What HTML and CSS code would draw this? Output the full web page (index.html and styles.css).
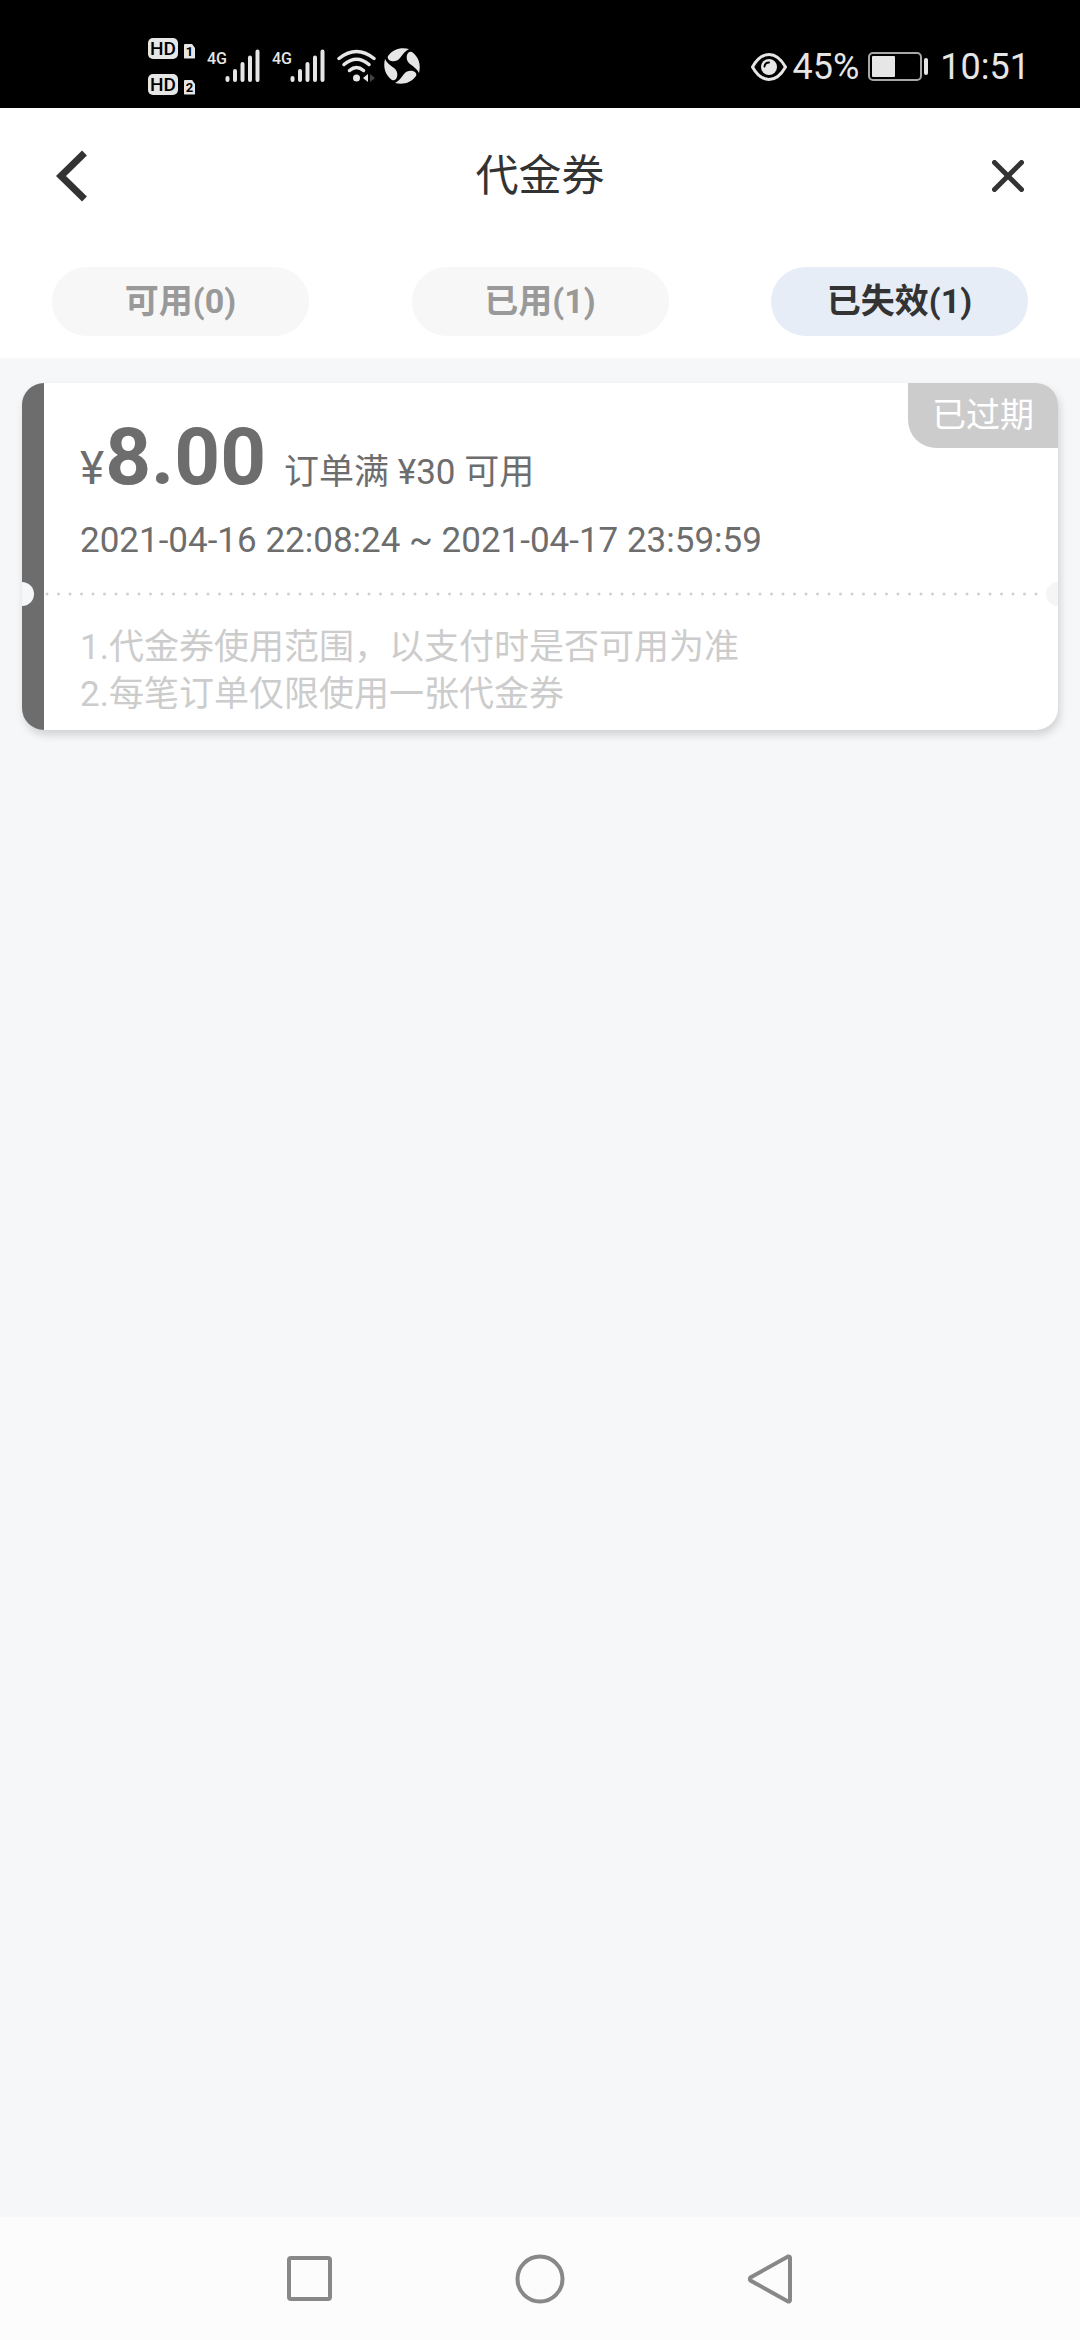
FILE: index.html
```html
<!DOCTYPE html>
<html lang="zh-CN">
<head>
  <meta charset="UTF-8" />
  <meta name="viewport" content="width=device-width, initial-scale=1.0" />
  <title>代金券</title>
  <link rel="stylesheet" href="styles.css">
</head>
<body>
  <div class="status-bar">
    <div class="status-left">
      <div class="hd-list">
        <div class="hd-row"><span class="hd">HD</span><span class="sim">1</span></div>
        <div class="hd-row"><span class="hd">HD</span><span class="sim">2</span></div>
      </div>
      <svg class="signal" width="53" height="34" viewBox="0 0 53 34">
        <text x="0" y="15">4G</text>
        <path d="M20.500 29v2M28 22v9M35.500 15v16M43 8.500v22.500M50.500 2.500v28.500" />
      </svg>
      <svg class="signal" width="53" height="34" viewBox="0 0 53 34">
        <text x="0" y="15">4G</text>
        <path d="M20.500 29v2M28 22v9M35.500 15v16M43 8.500v22.500M50.500 2.500v28.500" />
      </svg>
      <div class="status-icons">
        <svg width="39" height="34" viewBox="0 0 39 34">
          <g fill="none" stroke="#e6e6e6" stroke-width="3.500" stroke-linecap="round">
            <path d="M2 9.500Q19.500-4.500 37 9.500" />
            <path d="M7 15.500Q19.500 5 32 15.500" />
            <path d="M12.500 21.500Q19.500 15.500 26.500 21.500" />
          </g>
          <circle cx="19.500" cy="29" r="3.500" fill="#e6e6e6" />
          <path d="M31 25v8l-5-4z" fill="#e6e6e6" />
          <path d="M33 25l5 4-5 4z" fill="#444" />
        </svg>
        <svg width="36" height="36" viewBox="-18 -18 36 36" fill="#e6e6e6">
          <path d="M-14-10C-9-17-1-19 7-17C3-15 1-12-2-8C-5-4-10-4-13-6Q-15-8-14-10z" />
          <path d="M-14-10C-9-17-1-19 7-17C3-15 1-12-2-8C-5-4-10-4-13-6Q-15-8-14-10z" transform="rotate(90)" />
          <path d="M-14-10C-9-17-1-19 7-17C3-15 1-12-2-8C-5-4-10-4-13-6Q-15-8-14-10z" transform="rotate(180)" />
          <path d="M-14-10C-9-17-1-19 7-17C3-15 1-12-2-8C-5-4-10-4-13-6Q-15-8-14-10z" transform="rotate(270)" />
        </svg>
      </div>
    </div>
    <div class="status-right">
      <svg width="36" height="28" viewBox="0 0 36 28">
        <path d="M1.500 14C6 6 12 1.500 18 1.500S30 6 34.500 14C30 22 24 26.500 18 26.500S6 22 1.500 14z" fill="none" stroke="#e6e6e6" stroke-width="3" />
        <circle cx="18" cy="14" r="8" fill="#e6e6e6" />
        <path d="M13.500 13.500Q14 9.500 18 9.500" fill="none" stroke="#000" stroke-width="2" stroke-linecap="round" />
      </svg>
      <span class="percent">45%</span>
      <svg class="battery" width="60" height="30" viewBox="0 0 60 30">
        <rect x="1" y="1" width="52" height="27" rx="4" fill="none" stroke="#a5a8a5" stroke-width="2" />
        <rect x="4" y="4" width="23" height="21" rx="1" fill="#e6e6e6" />
        <rect x="56" y="6" width="4" height="17" rx="2" fill="#e6e6e6" />
      </svg>
      <span>10:51</span>
    </div>
  </div>

  <header class="header">
    <div class="title-bar">
      <button class="icon-btn" type="button" aria-label="返回">
        <svg width="32" height="52" viewBox="0 0 32 52"><path d="M28.500 3L5 26l23.500 23" stroke-width="7" /></svg>
      </button>
      <h1>代金券</h1>
      <button class="icon-btn" type="button" aria-label="关闭">
        <svg width="32" height="32" viewBox="0 0 32 32"><path d="M2.500 2.500l27 27M29.500 2.500l-27 27" stroke-width="5" stroke-linecap="round" /></svg>
      </button>
    </div>
    <nav class="tabs">
      <button class="tab" type="button">可用(0)</button>
      <button class="tab" type="button">已用(1)</button>
      <button class="tab active" type="button">已失效(1)</button>
    </nav>
  </header>

  <main class="content">
    <article class="coupon">
      <span class="tag">已过期</span>
      <div class="summary">
        <div class="amount"><span class="currency">¥</span><strong>8.00</strong></div>
        <div class="condition">订单满 ¥30 可用</div>
      </div>
      <div class="period">2021-04-16 22:08:24 ~ 2021-04-17 23:59:59</div>
      <div class="divider">
        <svg width="100%" height="4"><line x1="3" y1="2" x2="100%" y2="2" /></svg>
      </div>
      <div class="notes">
        <p>1.代金券使用范围，以支付时是否可用为准</p>
        <p>2.每笔订单仅限使用一张代金券</p>
      </div>
    </article>
  </main>

  <footer class="nav-bar">
    <button type="button" aria-label="最近任务">
      <svg width="52" height="52" viewBox="0 0 52 52"><rect x="5" y="5" width="41" height="41" rx="2" /></svg>
    </button>
    <button type="button" aria-label="主屏幕">
      <svg width="52" height="52" viewBox="0 0 52 52"><circle cx="26" cy="26" r="22.500" /></svg>
    </button>
    <button type="button" aria-label="返回">
      <svg width="52" height="52" viewBox="0 0 52 52"><path d="M44 3.500a1.500 1.500 0 0 1 2 1.500v42a1.500 1.500 0 0 1-2 1.500L6.500 27.500a2 2 0 0 1 0-3z" /></svg>
    </button>
  </footer>
</body>
</html>
```
FILE: styles.css
```css
* {
  box-sizing: border-box;
}
body {
  display: flex;
  flex-direction: column;
  min-height: 100vh;
  margin: 0;
  background-color: #f5f7f9;
  color: #333;
  font-family: Roboto, "Noto Sans CJK SC", sans-serif;
  font-size: 35px;
}
button {
  padding: 0;
  border: none;
  background: none;
  color: inherit;
  font: inherit;
  cursor: pointer;
}
svg {
  display: block;
}
h1, p {
  margin: 0;
}

/* status bar */
.status-bar {
  display: flex;
  justify-content: space-between;
  height: 108px;
  padding: 24px 50px 0 148px;
  background-color: #000;
  color: #e6e6e6;
}
.status-left, .status-right, .status-icons, .hd-row {
  display: flex;
  align-items: center;
}
.status-left {
  gap: 12px;
}
.status-icons {
  gap: 8px;
}
.hd-list {
  display: grid;
  gap: 15px;
}
.hd-row {
  align-items: flex-end;
  gap: 6px;
}
.hd, .sim {
  background-color: #e6e6e6;
  color: #000;
  text-align: center;
}
.hd {
  width: 30px;
  border-radius: 5px;
  font-size: 19px;
  font-weight: 500;
  line-height: 21px;
}
.sim {
  width: 11px;
  border-radius: 1px;
  clip-path: polygon(0 0, 70% 0, 100% 30%, 100% 100%, 0 100%);
  font-size: 13px;
  font-weight: 700;
  line-height: 15px;
}
.signal text {
  fill: #e6e6e6;
  font-size: 16px;
  font-weight: 500;
}
.signal path {
  fill: none;
  stroke: #e6e6e6;
  stroke-width: 4;
  stroke-linecap: round;
}
.status-right {
  padding-top: 2px;
  font-size: 36px;
}
.percent {
  margin-left: 6px;
}
.battery {
  margin: 0 12px 0 9px;
}

/* header */
.header {
  padding-bottom: 22px;
  background-color: #fff;
}
.title-bar {
  display: flex;
  align-items: center;
  justify-content: space-between;
  height: 136px;
  padding: 0 56px;
}
.title-bar h1 {
  padding-bottom: 8px;
  font-size: 43px;
  font-weight: 400;
}
.icon-btn path {
  fill: none;
  stroke: #333;
}
.tabs {
  display: flex;
  justify-content: space-between;
  margin-top: 23px;
  padding: 0 52px;
}
.tab {
  width: 257px;
  height: 69px;
  padding-bottom: 6px;
  border-radius: 35px;
  background-color: #f7f7f7;
  color: #999;
  font-size: 34px;
  font-weight: 700;
}
.tab.active {
  background-color: #e6edf6;
  color: #333;
}

/* coupon */
.content {
  flex: 1;
  padding: 25px 22px;
}
.coupon {
  position: relative;
  padding: 34px 0 12px;
  border-left: 22px solid #6d6d6d;
  border-radius: 22px;
  background-color: #fff;
  box-shadow: 2px 5px 8px rgba(0, 0, 0, 0.15);
  color: #6d6d6d;
  line-height: 47px;
}
.tag {
  position: absolute;
  top: 0;
  right: 0;
  padding: 0 24px;
  border-radius: 0 22px 0 28px;
  background-color: #ccc;
  color: #fff;
  font-size: 34px;
  line-height: 65px;
}
.summary {
  display: flex;
  align-items: baseline;
  gap: 18px;
  padding-left: 36px;
}
.amount, .currency {
  line-height: 46px;
}
.currency {
  margin-right: 1px;
  font-size: 46px;
}
.amount strong {
  font-size: 80px;
  line-height: 80px;
}
.period {
  margin-top: 20px;
  padding-left: 36px;
}
.divider {
  position: relative;
  margin: 28px 12px 28px 0;
}
.divider line {
  stroke: #d0d0d0;
  stroke-width: 3;
  stroke-linecap: round;
  stroke-dasharray: 0 11.5;
}
/* punched notches on both edges */
.divider::before, .divider::after {
  content: "";
  position: absolute;
  top: -10px;
  width: 12px;
  height: 24px;
}
.divider::before {
  left: -22px;
  border-radius: 0 12px 12px 0;
  background-color: #f5f7f9;
}
.divider::after {
  right: -12px;
  border-radius: 12px 0 0 12px;
  background-color: #f5f5f5;
}
.notes {
  padding-left: 36px;
  color: #ccc;
}

/* navigation bar */
.nav-bar {
  display: flex;
  align-items: center;
  justify-content: center;
  gap: 178px;
  height: 123px;
  background-color: #fcfcfc;
}
.nav-bar svg {
  fill: none;
  stroke: #888;
  stroke-width: 4;
}
```
